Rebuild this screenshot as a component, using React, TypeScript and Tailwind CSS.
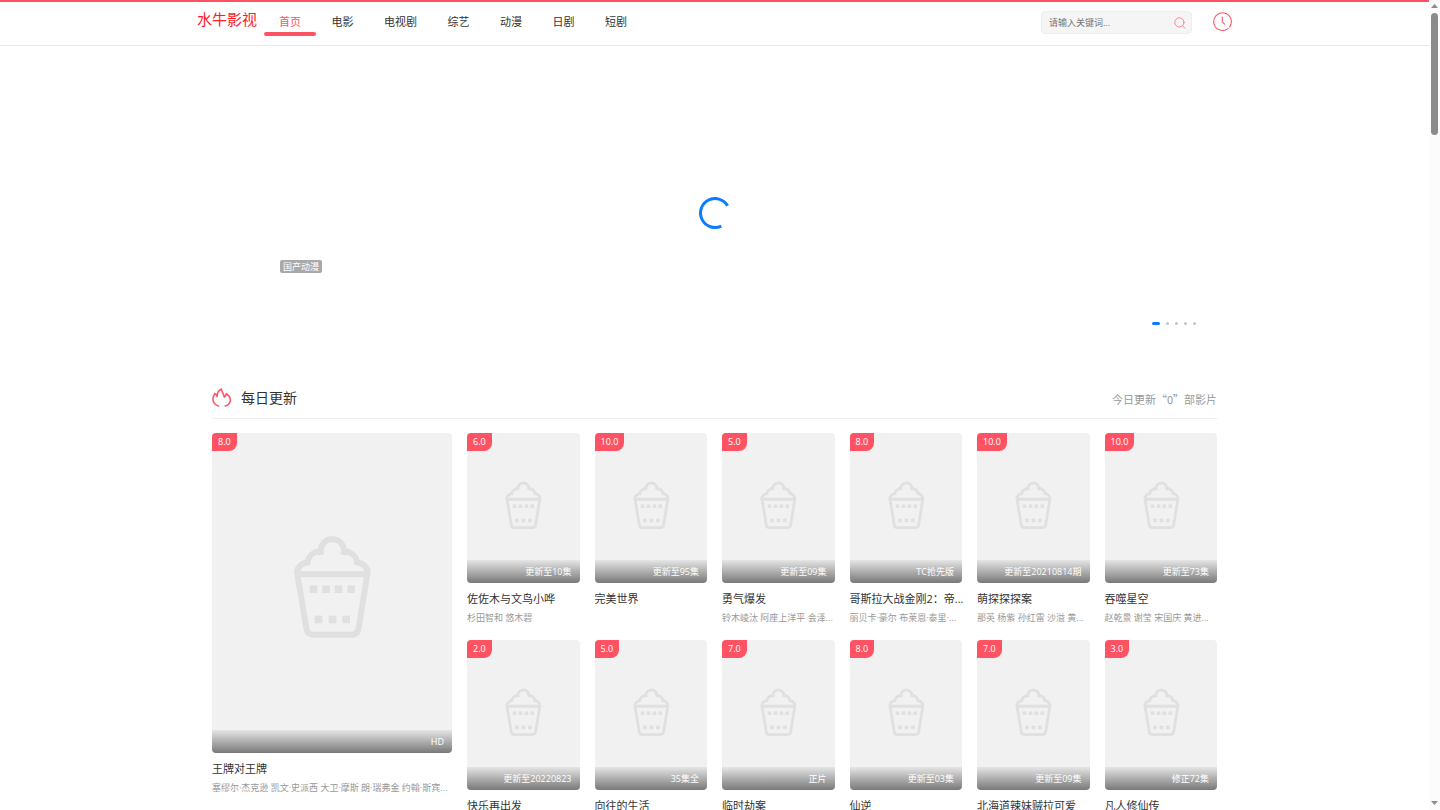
const navItems = ['首页', '电影', '电视剧', '综艺', '动漫', '日剧', '短剧'];

type Movie = { score: string; status: string; title: string; cast: string };

const featured: Movie = {
  score: '8.0',
  status: 'HD',
  title: '王牌对王牌',
  cast: '塞缪尔·杰克逊 凯文·史派西 大卫·摩斯 朗·瑞弗金 约翰·斯宾...',
};

const movies: Movie[] = [
  { score: '6.0', status: '更新至10集', title: '佐佐木与文鸟小哗', cast: '杉田智和 悠木碧' },
  { score: '10.0', status: '更新至95集', title: '完美世界', cast: '' },
  { score: '5.0', status: '更新至09集', title: '勇气爆发', cast: '铃木崚汰 阿座上洋平 会泽...' },
  { score: '8.0', status: 'TC抢先版', title: '哥斯拉大战金刚2：帝...', cast: '丽贝卡·豪尔 布莱恩·泰里·...' },
  { score: '10.0', status: '更新至20210814期', title: '萌探探探案', cast: '那英 杨紫 孙红雷 沙溢 黄...' },
  { score: '10.0', status: '更新至73集', title: '吞噬星空', cast: '赵乾景 谢莹 宋国庆 黄进...' },
  { score: '2.0', status: '更新至20220823', title: '快乐再出发', cast: '' },
  { score: '5.0', status: '35集全', title: '向往的生活', cast: '' },
  { score: '7.0', status: '正片', title: '临时劫案', cast: '' },
  { score: '8.0', status: '更新至03集', title: '仙逆', cast: '' },
  { score: '7.0', status: '更新至09集', title: '北海道辣妹贼拉可爱', cast: '' },
  { score: '3.0', status: '修正72集', title: '凡人修仙传', cast: '' },
];

function Popcorn() {
  return (
    <svg viewBox="36 -260 720 960" className="block h-full w-full" aria-hidden="true">
      <g fill="none" stroke="#e0e0e0" strokeWidth="18" strokeLinejoin="round">
        <path d="M292 164 L319 325 Q322 345 340 345 H456 Q473 345 476 325 L502 164 Z" />
        <path d="M292 164 C288 147 302 131 324 128" />
        <path d="M502 164 C506 147 492 131 470 128" />
        <path d="M322 136 C322 110 340 95 366 95" />
        <path d="M472 136 C472 110 454 95 428 95" />
        <path d="M364 106 C356 78 376 59 397 59 C418 59 438 78 430 106" />
      </g>
      <g fill="#e0e0e0">
        {[329, 367, 404, 442].map((x) => (
          <rect key={x} x={x} y="197" width="23" height="23" />
        ))}
        {[344, 386, 427].map((x) => (
          <rect key={x} x={x} y="288" width="23" height="23" />
        ))}
      </g>
    </svg>
  );
}

function MovieCard({ movie, className = '' }: { movie: Movie; className?: string }) {
  return (
    <li className={`min-w-0 ${className}`}>
      <a href="#" className="relative block aspect-3/4 overflow-hidden rounded bg-[#f1f1f1]">
        <Popcorn />
        <span className="absolute top-0 left-0 rounded-br-lg bg-[#ff5364] px-[6px] text-[9px] leading-[18px] font-medium text-white">
          {movie.score}
        </span>
        <span className="absolute inset-x-0 bottom-0 bg-linear-to-b from-black/5 to-black/50 px-2 text-right text-[9px] leading-[23px] text-white">
          {movie.status}
        </span>
      </a>
      <div className="pt-2 pb-[15px] whitespace-nowrap">
        <h3 className="h-4 text-[11px] leading-4 text-[#333]">
          <a href="#">{movie.title}</a>
        </h3>
        <p className="mt-1 h-[14px] text-[9px] leading-[14px] text-[#999]">{movie.cast}</p>
      </div>
    </li>
  );
}

function Header() {
  return (
    <header className="border-t-2 border-b border-t-[#ff5364] border-b-[#e8e8e8]">
      <div className="mx-auto flex h-[43px] max-w-[1035px] items-start">
        <a href="#" className="pt-[7px] text-[15px] leading-5 text-[#ff1a2b]">水牛影视</a>
        <nav className="ml-[7px] flex w-[378px] justify-between">
          {navItems.map((item, i) => (
            <a
              key={item}
              href="#"
              className={
                i === 0
                  ? 'flex flex-col text-[11px] text-[#ff5364]'
                  : 'flex flex-col text-[11px] text-[#333]'
              }
            >
              <span className="px-[15px] pt-[10px] leading-5">{item}</span>
              {i === 0 && <span className="h-1 rounded-full bg-[#ff5364]" />}
            </a>
          ))}
        </nav>
        <form className="mt-[9px] ml-auto flex h-[23px] w-[151px] items-center rounded border border-[#eee] bg-[#f5f5f5] pr-[5px] pl-[7px]">
          <input
            type="text"
            aria-label="搜索"
            placeholder="请输入关键词..."
            className="min-w-0 flex-1 bg-transparent text-[9px] text-[#333] outline-none placeholder:text-[#757575]"
          />
          <button type="button" aria-label="搜索">
            <svg viewBox="0 0 12 12" className="size-3" fill="none" stroke="#ff6b79" strokeWidth="0.8" strokeLinecap="round">
              <circle cx="5.4" cy="5.4" r="4.6" />
              <path d="M8.8 8.9 L11 11.2" />
            </svg>
          </button>
        </form>
        <button type="button" aria-label="播放记录" className="mt-[10px] ml-[21px]">
          <svg viewBox="0 0 19 19" className="size-[19px]" fill="none" stroke="#ff5364" strokeWidth="1.1" strokeLinecap="round">
            <path d="M16.6 14.8 A8.8 8.8 0 1 0 15.2 16.3" />
            <path d="M9.3 5 V9.8 L11.6 12.2" />
          </svg>
        </button>
      </div>
    </header>
  );
}

function Hero() {
  return (
    <section className="relative">
      <div className="mx-auto flex h-[334px] max-w-[1005px] flex-col justify-end pb-[55px]">
        <span className="ml-[68px] self-start rounded-xs bg-[#a9a9a9] px-[3px] text-[9px] leading-[13px] text-white">
          国产动漫
        </span>
        <div className="mt-[49px] mr-[21px] flex gap-[6px] self-end">
          <span className="h-[3px] w-2 rounded-full bg-[#0a7cff]" />
          {[1, 2, 3, 4].map((n) => (
            <span key={n} className="size-[3px] rounded-full bg-[#c4c4c4]" />
          ))}
        </div>
      </div>
      <div className="absolute inset-0 flex items-center justify-center">
        <svg viewBox="-16 -16 32 32" className="size-8" fill="none" stroke="#0a7cff" strokeWidth="3" aria-hidden="true">
          <path d="M12.6 -7.2 A14.5 14.5 0 1 0 6.3 13.1" />
        </svg>
      </div>
    </section>
  );
}

function Scrollbar() {
  return (
    <div className="flex w-[11px] shrink-0 flex-col items-center bg-[#fcfcfc] pt-1 pb-[5px]" aria-hidden="true">
      <svg viewBox="0 0 7 4" className="h-1 w-[7px]" fill="#8b8b8b">
        <path d="M3.5 0 L7 4 H0 Z" />
      </svg>
      <div className="mt-[5px] h-[122px] w-[7px] rounded-full bg-[#8b8b8b]" />
      <svg viewBox="0 0 7 4" className="mt-auto h-1 w-[7px]" fill="#8b8b8b">
        <path d="M0 0 H7 L3.5 4 Z" />
      </svg>
    </div>
  );
}

export default function App() {
  return (
    <div
      lang="zh-CN"
      className="flex h-screen bg-white font-['Open_Sans','Noto_Sans_CJK_SC',sans-serif]"
    >
      <div className="min-w-0 flex-1 overflow-y-auto [scrollbar-width:none]">
        <Header />
        <main>
          <Hero />
          <section className="mx-auto max-w-[1005px]">
            <div className="flex h-[39px] items-center border-b border-[#eee] pb-[3px]">
              <svg viewBox="35 25 56 56" className="size-[19px]" fill="none" stroke="#ff5364" strokeWidth="4.5" strokeLinecap="round" strokeLinejoin="round" aria-hidden="true">
                <path d="M54 78 C42 75 35 63 39 51 C40 48 42 45 43 41 C47 43 49 46 50 50 C50 41 54 32 63 28 C63 36 70 42 71 52 C74 49 76 46 77 42 C84 46 89 54 89 61 C88 71 82 76 74 78" />
              </svg>
              <h2 className="ml-[10px] text-[14px] leading-5 text-[#333]">每日更新</h2>
              <p className="ml-auto pt-[3px] font-['Noto_Sans_CJK_SC',sans-serif] text-[11px] leading-4 text-[#999]">
                今日更新“0”部影片
              </p>
            </div>
            <ul className="mt-[14px] grid grid-cols-8 gap-x-[15px]">
              <MovieCard movie={featured} className="col-span-2 row-span-2" />
              {movies.map((movie) => (
                <MovieCard key={movie.title} movie={movie} />
              ))}
            </ul>
          </section>
        </main>
      </div>
      <Scrollbar />
    </div>
  );
}
